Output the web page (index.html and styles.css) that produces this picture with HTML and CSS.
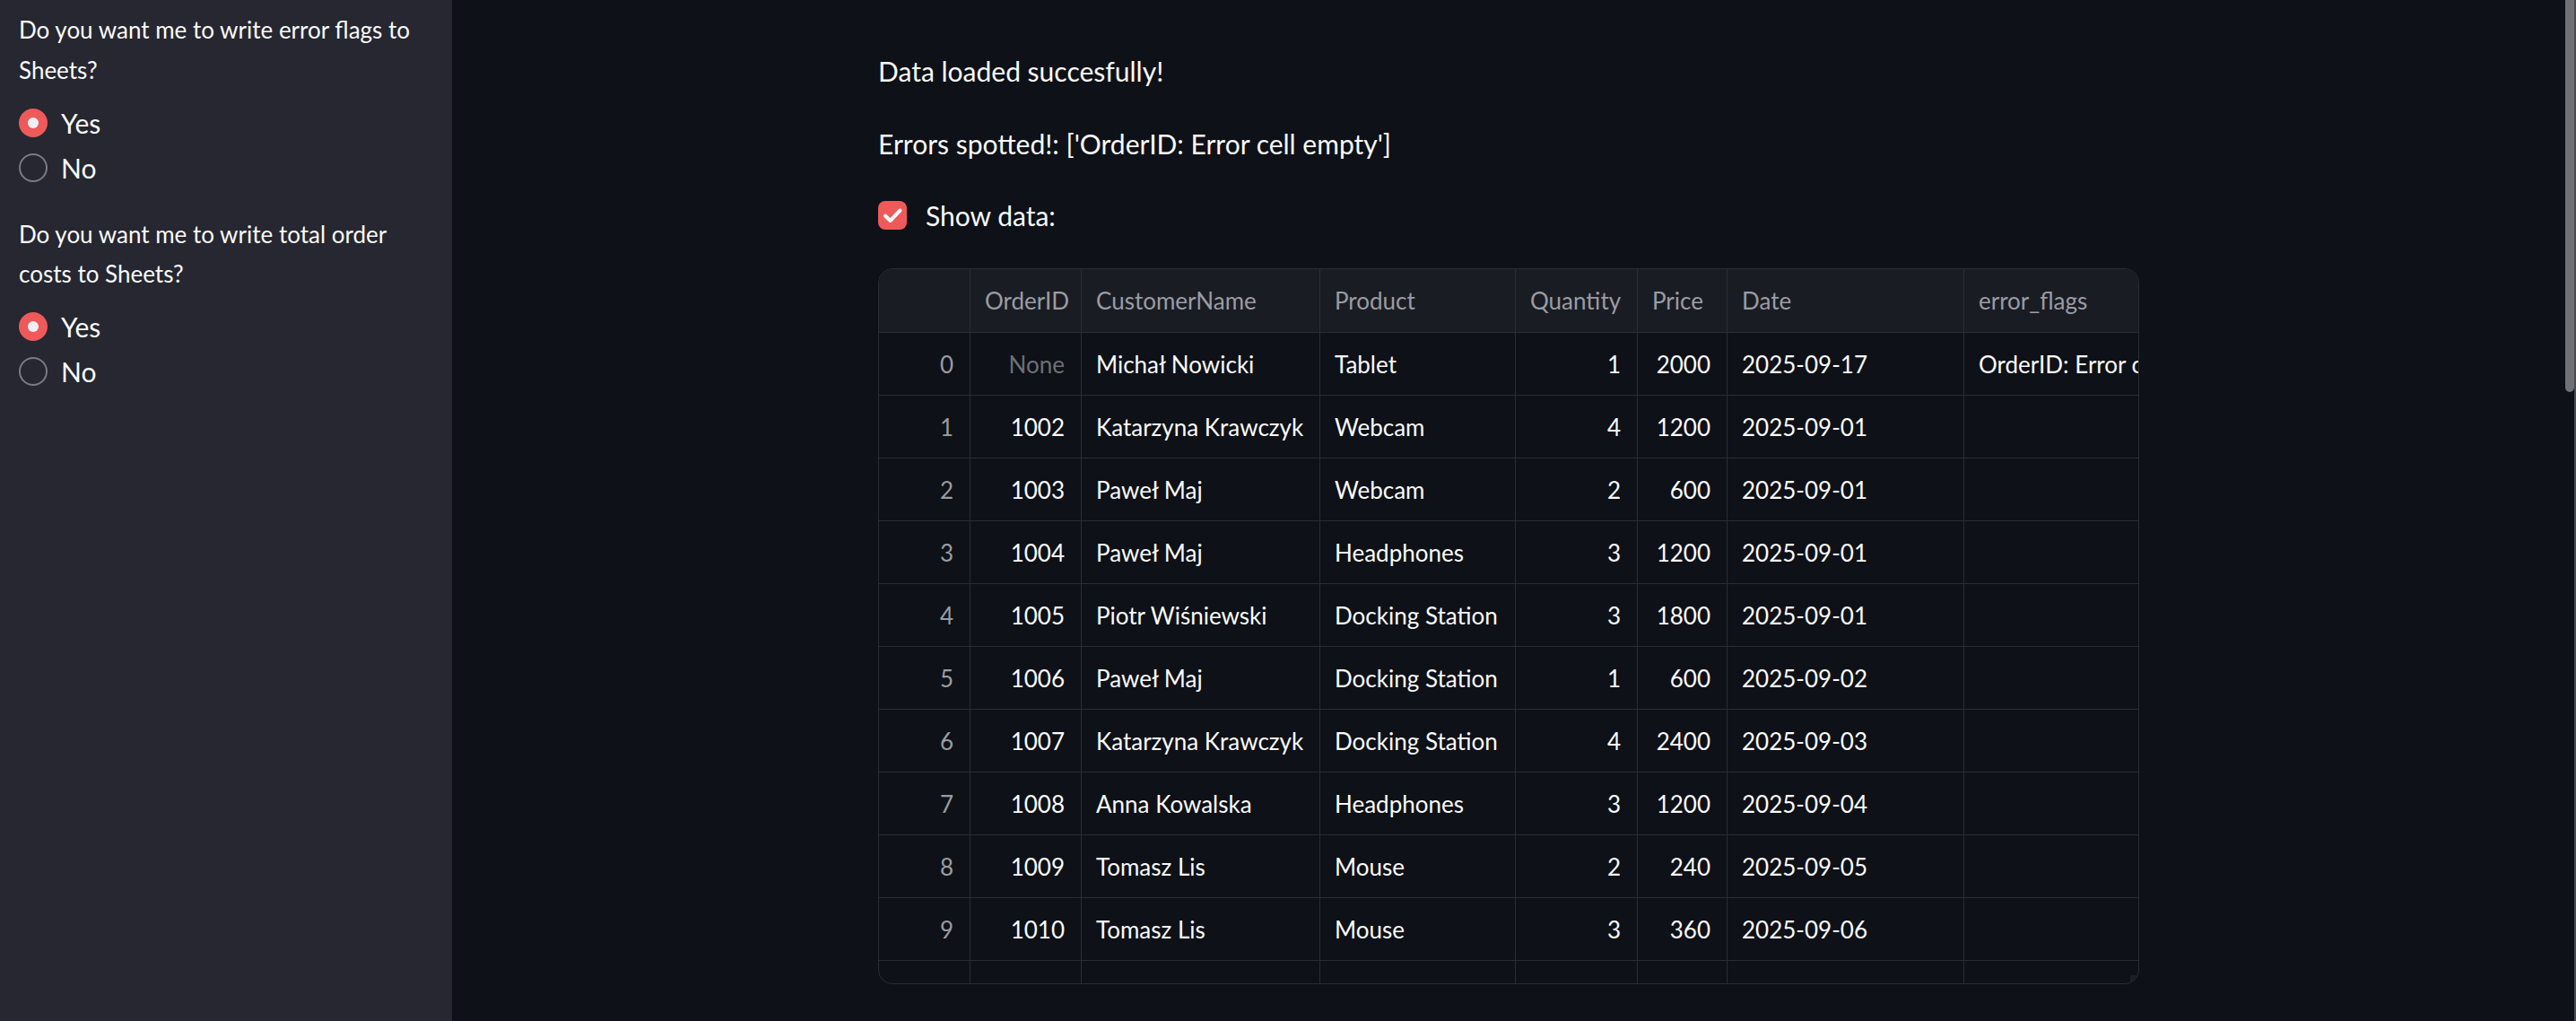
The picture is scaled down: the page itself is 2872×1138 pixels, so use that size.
FILE: index.html
```html
<!DOCTYPE html>
<html lang="en">
<head>
<meta charset="utf-8">
<title>Orders</title>
<link rel="stylesheet" href="styles.css">
</head>
<body>
<div class="app">
  <aside class="sidebar">
    <div class="widget">
      <div class="label"><span class="ln">Do you want me to write error flags to</span><span class="ln">Sheets?</span></div>
      <div class="radios">
        <div class="radio"><span class="dot dot-on"></span><span class="radio-text">Yes</span></div>
        <div class="radio"><span class="dot"></span><span class="radio-text">No</span></div>
      </div>
    </div>
    <div class="widget widget-next">
      <div class="label"><span class="ln">Do you want me to write total order</span><span class="ln">costs to Sheets?</span></div>
      <div class="radios">
        <div class="radio"><span class="dot dot-on"></span><span class="radio-text">Yes</span></div>
        <div class="radio"><span class="dot"></span><span class="radio-text">No</span></div>
      </div>
    </div>
  </aside>
  <main class="main">
    <div class="content">
      <p class="text first">Data loaded succesfully!</p>
      <p class="text second">Errors spotted!: ['OrderID: Error cell empty']</p>
      <div class="check">
        <span class="box"><svg viewBox="0 0 32 32" width="32" height="32"><path d="M8 16.5l5.5 5.5L24.5 10.5" fill="none" stroke="#fafafa" stroke-width="4" stroke-linecap="round" stroke-linejoin="round"/></svg></span>
        <span class="check-text">Show data:</span>
      </div>
      <div class="grid">
        <div class="hd"></div><div class="hd">OrderID</div><div class="hd">CustomerName</div><div class="hd">Product</div><div class="hd">Quantity</div><div class="hd">Price</div><div class="hd">Date</div><div class="hd last">error_flags</div>

        <div class="c idx">0</div><div class="c num none">None</div><div class="c">Michał Nowicki</div><div class="c">Tablet</div><div class="c num">1</div><div class="c num">2000</div><div class="c">2025-09-17</div><div class="c last">OrderID: Error cell empty</div>
        <div class="c idx">1</div><div class="c num">1002</div><div class="c">Katarzyna Krawczyk</div><div class="c">Webcam</div><div class="c num">4</div><div class="c num">1200</div><div class="c">2025-09-01</div><div class="c last"></div>
        <div class="c idx">2</div><div class="c num">1003</div><div class="c">Paweł Maj</div><div class="c">Webcam</div><div class="c num">2</div><div class="c num">600</div><div class="c">2025-09-01</div><div class="c last"></div>
        <div class="c idx">3</div><div class="c num">1004</div><div class="c">Paweł Maj</div><div class="c">Headphones</div><div class="c num">3</div><div class="c num">1200</div><div class="c">2025-09-01</div><div class="c last"></div>
        <div class="c idx">4</div><div class="c num">1005</div><div class="c">Piotr Wiśniewski</div><div class="c">Docking Station</div><div class="c num">3</div><div class="c num">1800</div><div class="c">2025-09-01</div><div class="c last"></div>
        <div class="c idx">5</div><div class="c num">1006</div><div class="c">Paweł Maj</div><div class="c">Docking Station</div><div class="c num">1</div><div class="c num">600</div><div class="c">2025-09-02</div><div class="c last"></div>
        <div class="c idx">6</div><div class="c num">1007</div><div class="c">Katarzyna Krawczyk</div><div class="c">Docking Station</div><div class="c num">4</div><div class="c num">2400</div><div class="c">2025-09-03</div><div class="c last"></div>
        <div class="c idx">7</div><div class="c num">1008</div><div class="c">Anna Kowalska</div><div class="c">Headphones</div><div class="c num">3</div><div class="c num">1200</div><div class="c">2025-09-04</div><div class="c last"></div>
        <div class="c idx">8</div><div class="c num">1009</div><div class="c">Tomasz Lis</div><div class="c">Mouse</div><div class="c num">2</div><div class="c num">240</div><div class="c">2025-09-05</div><div class="c last"></div>
        <div class="c idx">9</div><div class="c num">1010</div><div class="c">Tomasz Lis</div><div class="c">Mouse</div><div class="c num">3</div><div class="c num">360</div><div class="c">2025-09-06</div><div class="c last"></div>
        <div class="c idx"></div><div class="c num"></div><div class="c">Piotr Wiśniewski</div><div class="c">Monitor</div><div class="c num"></div><div class="c num"></div><div class="c"></div><div class="c last"></div>
        <span class="handle"></span>
      </div>
    </div>
  </main>
  <div class="scrollbar"><div class="thumb"></div></div>
</div>
</body>
</html>
```

FILE: styles.css
```css
* { box-sizing: border-box; }
html, body { margin: 0; padding: 0; height: 100%; overflow: hidden; }
body {
  background: #0e1117;
  color: #fafafa;
  font-family: Lato, "Noto Sans", sans-serif;
}
.app { display: flex; height: 1138px; }

.sidebar {
  width: 504px;
  flex: 0 0 504px;
  background: #262730;
  padding: 11px 21px 0 21px;
}
.label {
  font-size: 26px;
  line-height: 44.8px;
  color: #fafafa;
  display: flex;
  flex-direction: column;
}
.ln { white-space: nowrap; }
.radios { margin-top: 11px; display: flex; flex-direction: column; }
.radio { height: 50px; display: flex; align-items: center; gap: 15px; font-size: 30px; }
.dot {
  width: 32px; height: 32px; border-radius: 50%;
  border: 2px solid #7a7c83;
  display: flex; align-items: center; justify-content: center;
  flex: 0 0 32px;
}
.dot-on { background: #ee5a5a; border-color: #ee5a5a; }
.dot-on::after { content: ""; width: 12px; height: 12px; border-radius: 50%; background: #eef0f6; }
.widget-next { margin-top: 27px; }

.main { flex: 1; display: flex; justify-content: center; }
.content { width: 1406px; padding-top: 54px; display: flex; flex-direction: column; }
.text { margin: 0; font-size: 30px; line-height: 51.2px; }
.second { margin-top: 30px; }
.check { margin-top: 28px; height: 51px; display: flex; align-items: center; gap: 21px; font-size: 30px; }
.box { width: 32px; height: 32px; border-radius: 8px; background: #ee5a5a; display: block; }
.box svg { display: block; }

.grid {
  margin-top: 34px;
  height: 798px;
  border: 1px solid #2b2d35;
  border-radius: 16px;
  overflow: hidden;
  display: grid;
  grid-template-columns: 102px 124px 266px 218px 136px 100px 264px 1fr;
  grid-auto-rows: 70px;
  grid-template-rows: 71px;
  font-size: 26px;
  position: relative;
}
.hd {
  background: #1a1c24;
  color: #9a9ca3;
  border-right: 1px solid #2b2d35;
  border-bottom: 1px solid #2b2d35;
  display: flex; align-items: center;
  padding: 0 10px 0 16px;
  white-space: nowrap; overflow: hidden;
}
.c {
  border-right: 1px solid #2b2d35;
  border-bottom: 1px solid #2b2d35;
  display: flex; align-items: center;
  padding: 0 18px 0 16px;
  white-space: nowrap; overflow: hidden;
  color: #fafafa;
}
.last { border-right: none; padding-right: 0; }
.num, .idx { justify-content: flex-end; }
.idx { color: #9a9ca3; }
.none { color: #6e7077; }
.handle { position: absolute; right: 0; bottom: 0; width: 9px; height: 9px; background: #1d1f26; }

.scrollbar { width: 12px; flex: 0 0 12px; border-right: 2px solid #4a4b50; }
.thumb { width: 10px; height: 437px; background: #707177; border-radius: 0 0 5px 5px; }
```
